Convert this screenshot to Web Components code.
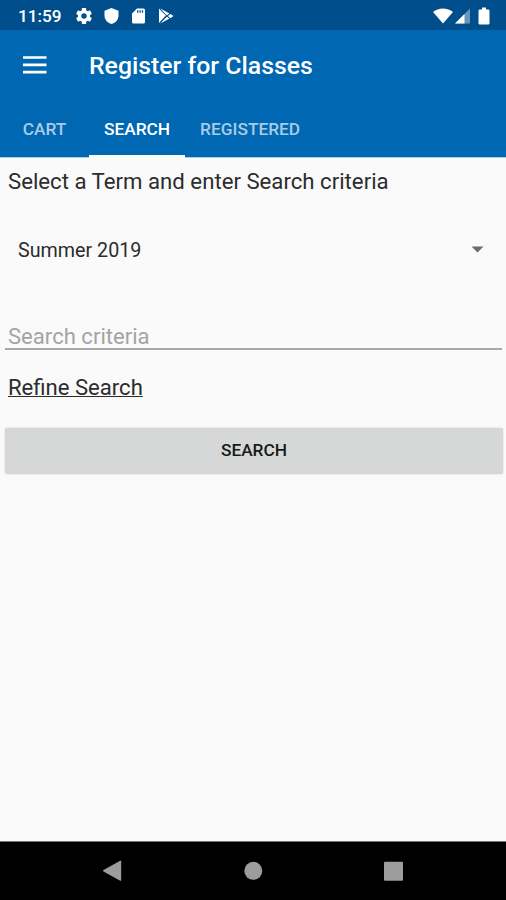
<!DOCTYPE html>
<html lang="en">
<head>
<meta charset="utf-8">
<title>Register for Classes</title>
<style>
	html, body {
		margin: 0;
		height: 100%;
	}

	body {
		font-family: Roboto, "Liberation Sans", sans-serif;
		background: #fafafa;
		overflow: hidden;
	}
</style>
</head>
<body>
<register-app></register-app>

<script>
class StatusBar extends HTMLElement {

	constructor() {
		super();
		this.attachShadow({mode: 'open'});
		this.render();
	};

	render() {
		this.shadowRoot.innerHTML = `
			<style>
				:host {
					display: flex;
					align-items: center;
					box-sizing: border-box;
					height: 30px;
					padding: 2px 16px 0 18px;
					background: #004f8c;
					color: #fff;
				}

				time {
					width: 58px;
					font-size: 17.2px;
					line-height: 28px;
					font-weight: 500;
				}

				svg {
					display: block;
					fill: currentColor;
				}

				.left, .right {
					display: flex;
					align-items: center;
				}

				.left { gap: 13px; }
				.left svg:nth-child(2) { margin-left: -1px; }
				.right { margin-left: auto; gap: 2px; }
				.battery { margin-left: 6px; }
			</style>

			<time>11:59</time>
			<div class="left">
				<svg width="16" height="16" viewBox="2 2 20 20"><path d="M19.43 12.98c.04-.32.07-.64.07-.98s-.03-.66-.07-.98l2.11-1.65c.19-.15.24-.42.12-.64l-2-3.46c-.12-.22-.39-.3-.61-.22l-2.49 1c-.52-.4-1.08-.73-1.69-.98l-.38-2.65C14.46 2.18 14.25 2 14 2h-4c-.25 0-.46.18-.49.42l-.38 2.65c-.61.25-1.17.59-1.69.98l-2.49-1c-.23-.09-.49 0-.61.22l-2 3.46c-.13.22-.07.49.12.64l2.11 1.65c-.04.32-.07.65-.07.98s.03.66.07.98l-2.11 1.65c-.19.15-.24.42-.12.64l2 3.46c.12.22.39.3.61.22l2.49-1c.52.4 1.08.73 1.69.98l.38 2.65c.03.24.24.42.49.42h4c.25 0 .46-.18.49-.42l.38-2.65c.61-.25 1.17-.59 1.69-.98l2.49 1c.23.09.49 0 .61-.22l2-3.46c.12-.22.07-.49-.12-.64l-2.11-1.65zM12 15.5c-1.93 0-3.5-1.57-3.5-3.5s1.57-3.5 3.5-3.5 3.5 1.57 3.5 3.5-1.57 3.5-3.5 3.5z"/></svg>
				<svg width="15" height="16" viewBox="-.5 0 15 16"><path d="M7 0l7 2.7v4.8C14 11.500 11 15 7 16 3 15 0 11.500 0 7.500V2.700z"/></svg>
				<svg width="13" height="16" viewBox="0 0 13 16"><path fill-rule="evenodd" d="M5 .4h6.500q1.500 0 1.500 1.500v12q0 1.500-1.500 1.500h-10Q0 15.400 0 13.900V5.400zM5.100 2.300v2.500h1.300V2.300zm2.400 0v2.500h1.300V2.300zm2.400 0v2.500h1.200V2.300z"/></svg>
				<svg width="16" height="16" viewBox="0 0 16 16"><path d="M1 .5l7 6.800L1.700 14.200 1 15z"/><path d="M2.300.6l9.200 4.900-2.600 2zM9.800 8l2.600-2.100 3.100 2.100-3.100 2.200zM2.300 15.400l9.200-4.900-2.600-2z"/><path d="M2.200 1.600l9.800 9.300M2.200 14.500L12 5.300" stroke="#004f8c" stroke-width=".6"/></svg>
			</div>
			<div class="right">
				<svg width="20" height="16" viewBox="0 0 20 16"><path d="M0 4C5.500-.8 14.500-.8 20 4L10 15.500z"/></svg>
				<svg width="15" height="16" viewBox="0 0 15 16"><path opacity=".4" d="M15 .5v15H0z"/><path d="M9.500 6v9.500H0z"/></svg>
				<svg class="battery" width="12" height="18" viewBox="0 0 12 18"><path d="M4 .5h4v2h2.200q1.300 0 1.300 1.300v12.400q0 1.300-1.300 1.300H1.800Q.5 17.500.5 16.200V3.800q0-1.300 1.300-1.300H4z"/></svg>
			</div>
		`;
	};
};

customElements.define('status-bar', StatusBar);

class AppBar extends HTMLElement {

	constructor() {
		super();
		this.attachShadow({mode: 'open'});
		this.render();
	};

	render() {
		this.shadowRoot.innerHTML = `
			<style>
				:host {
					display: block;
					height: 127px;
					background: #0067b3;
					color: #fff;
					border-bottom: 1px solid #b4cbdd;
				}

				header {
					display: flex;
					align-items: center;
					height: 71px;
					padding-left: 23px;
				}

				svg {
					display: block;
					margin-right: 42px;
				}

				h1 {
					margin: 0;
					font-size: 24.8px;
					font-weight: 500;
				}

				nav {
					display: flex;
					height: 57px;
				}
			</style>

			<header>
				<svg width="24" height="20" viewBox="0 0 24 20" fill="none" stroke="#fff" stroke-width="2.700"><path d="M0 1.500h23.500M0 8.800h23.500M0 16.200h23.500"/></svg>
				<h1><slot name="title"></slot></h1>
			</header>
			<nav><slot></slot></nav>
		`;
	};
};

customElements.define('app-bar', AppBar);

class AppTab extends HTMLElement {

	constructor() {
		super();
		this.attachShadow({mode: 'open'});
		this.render();
	};

	render() {
		this.shadowRoot.innerHTML = `
			<style>
				:host {
					display: block;
					box-sizing: border-box;
					min-width: 89px;
					height: 57px;
					padding: 0 15px;
					font-size: 17.3px;
					line-height: 56px;
					font-weight: 500;
					text-align: center;
					color: #a9cbe5;
				}

				:host([active]) {
					color: #fff;
					border-bottom: 3px solid #fafafa;
				}
			</style>
			<slot></slot>
		`;
	};
};

customElements.define('app-tab', AppTab);

class TermSelect extends HTMLElement {

	constructor() {
		super();
		this.attachShadow({mode: 'open'});
		this.render();
	};

	render() {
		this.shadowRoot.innerHTML = `
			<style>
				:host {
					display: flex;
					align-items: center;
					justify-content: space-between;
					height: 30px;
					padding: 0 22px 0 18px;
					font-size: 19.7px;
					color: #2c2c2c;
				}

				svg {
					fill: #6b6b6b;
					margin-top: -2px;
				}
			</style>
			<span><slot></slot></span>
			<svg width="13" height="7" viewBox="0 0 13 7"><path d="M.5.5h12L6.500 6.500z"/></svg>
		`;
	};
};

customElements.define('term-select', TermSelect);

class SearchField extends HTMLElement {

	constructor() {
		super();
		this.attachShadow({mode: 'open'});
		this.render();
	};

	render() {
		this.shadowRoot.innerHTML = `
			<style>
				:host {
					display: block;
					margin: 0 4px 0 5px;
					padding-left: 3px;
					height: 25px;
					border-bottom: 2px solid #a9a9a9;
					font-size: 22.1px;
					line-height: 26px;
					color: #a4a4a4;
				}
			</style>
			<slot></slot>
		`;
	};
};

customElements.define('search-field', SearchField);

class RaisedButton extends HTMLElement {

	constructor() {
		super();
		this.attachShadow({mode: 'open'});
		this.render();
	};

	render() {
		this.shadowRoot.innerHTML = `
			<style>
				:host {
					display: block;
					margin: 0 3px 0 5px;
				}

				button {
					display: block;
					width: 100%;
					height: 46px;
					padding: 0 0 2px;
					border: 0;
					border-radius: 2px;
					background: #d6d8d7;
					box-shadow: 0 0 2px rgba(0, 0, 0, .18);
					color: #1a1a1a;
					font: 500 17.3px/44px Roboto, "Liberation Sans", sans-serif;
				}
			</style>
			<button><slot></slot></button>
		`;
	};
};

customElements.define('raised-button', RaisedButton);

class NavigationBar extends HTMLElement {

	constructor() {
		super();
		this.attachShadow({mode: 'open'});
		this.render();
	};

	render() {
		this.shadowRoot.innerHTML = `
			<style>
				:host {
					display: flex;
					align-items: center;
					justify-content: space-between;
					box-sizing: border-box;
					height: 59px;
					padding: 0 102px;
					border-top: 1px solid #777;
					background: #000;
				}

				svg {
					display: block;
					fill: #9c9c9c;
				}
			</style>
			<svg width="20" height="22" viewBox="0 0 20 22"><path d="M1.500 10.100 18.200.8q1-.5 1 .5v18.900q0 1-1 .5L1.500 11.600q-1.100-.7 0-1.500z"/></svg>
			<svg width="20" height="20" viewBox="0 0 20 20"><circle cx="10.300" cy="9.800" r="9"/></svg>
			<svg width="20" height="20" viewBox="0 0 20 20"><rect x="0" y=".8" width="19" height="19" rx="1"/></svg>
		`;
	};
};

customElements.define('navigation-bar', NavigationBar);

class RegisterApp extends HTMLElement {

	constructor() {
		super();
		this.attachShadow({mode: 'open'});
		this.render();
	};

	render() {
		this.shadowRoot.innerHTML = `
			<style>
				:host {
					display: flex;
					flex-direction: column;
					height: 100vh;
				}

				main {
					flex: 1;
					display: flex;
					flex-direction: column;
				}

				p {
					margin: 9px 8px 0;
					font-size: 22.2px;
					line-height: 28px;
					color: #2c2c2c;
				}

				term-select { margin-top: 40px; }
				search-field { margin-top: 58px; }

				.refine {
					align-self: flex-start;
					margin: 23px 8px 0;
					font-size: 22.1px;
					line-height: 28px;
					color: #2c2c2c;
					text-decoration: underline;
					text-decoration-thickness: 1px;
					text-underline-offset: 1px;
					text-decoration-skip-ink: none;
				}

				raised-button { margin-top: 27px; }
			</style>

			<status-bar></status-bar>
			<app-bar>
				<span slot="title">Register for Classes</span>
				<app-tab>CART</app-tab>
				<app-tab active>SEARCH</app-tab>
				<app-tab>REGISTERED</app-tab>
			</app-bar>
			<main>
				<p>Select a Term and enter Search criteria</p>
				<term-select>Summer 2019</term-select>
				<search-field>Search criteria</search-field>
				<a class="refine">Refine Search</a>
				<raised-button>SEARCH</raised-button>
			</main>
			<navigation-bar></navigation-bar>
		`;
	};
};

customElements.define('register-app', RegisterApp);
</script>
</body>
</html>
